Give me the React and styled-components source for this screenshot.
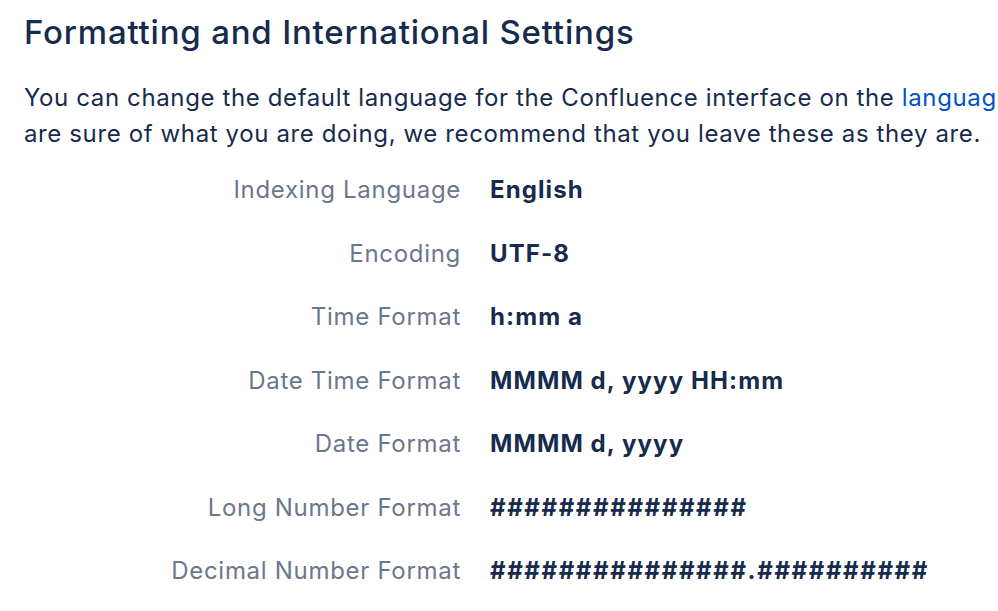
import React from "react";
import styled, { createGlobalStyle } from "styled-components";

const settings = [
  { label: "Indexing Language", value: "English" },
  { label: "Encoding", value: "UTF-8" },
  { label: "Time Format", value: "h:mm a" },
  { label: "Date Time Format", value: "MMMM d, yyyy HH:mm" },
  { label: "Date Format", value: "MMMM d, yyyy" },
  { label: "Long Number Format", value: "###############", pattern: true },
  { label: "Decimal Number Format", value: "###############.##########", pattern: true },
];

const GlobalStyle = createGlobalStyle`
  html, body {
    margin: 0;
    padding: 0;
    background: #fff;
    overflow: hidden;
  }
  body {
    font-family: Inter, "Noto Sans", sans-serif;
    color: #172b4d;
    -webkit-font-smoothing: antialiased;
  }
`;

const Page = styled.main`
  padding: 10px 24px 0 24px;
  width: 1400px;
`;

const Heading = styled.h2`
  margin: 0;
  font-size: 33px;
  font-weight: 500;
  line-height: 44px;
  letter-spacing: 0.8px;
  color: #172b4d;
`;

const Intro = styled.p`
  margin: 26px 0 0 0;
  font-size: 24px;
  line-height: 36px;
  letter-spacing: 0.62px;
  white-space: nowrap;
  color: #172b4d;
`;

const Link = styled.a`
  color: #0052cc;
  text-decoration: none;
`;

const Grid = styled.dl`
  display: grid;
  grid-template-columns: 437px auto;
  column-gap: 29px;
  row-gap: 27.5px;
  margin: 20px 0 0 0;
  font-size: 24px;
  line-height: 36px;
`;

const Label = styled.dt`
  text-align: right;
  letter-spacing: 0.7px;
  color: #6b778c;
`;

const Value = styled.dd`
  margin: 0;
  font-weight: 700;
  letter-spacing: ${(p) => (p.$pattern ? "1.6px" : "1.1px")};
  color: #172b4d;
`;

export default function App() {
  return (
    <>
      <GlobalStyle />
      <Page>
        <Heading>Formatting and International Settings</Heading>
        <Intro>
          You can change the default language for the Confluence interface on the{" "}
          <Link href="#">language</Link> page. Unless you
          <br />
          are sure of what you are doing, we recommend that you leave these as they are.
        </Intro>
        <Grid>
          {settings.map((s) => (
            <React.Fragment key={s.label}>
              <Label>{s.label}</Label>
              <Value $pattern={s.pattern}>{s.value}</Value>
            </React.Fragment>
          ))}
        </Grid>
      </Page>
    </>
  );
}
